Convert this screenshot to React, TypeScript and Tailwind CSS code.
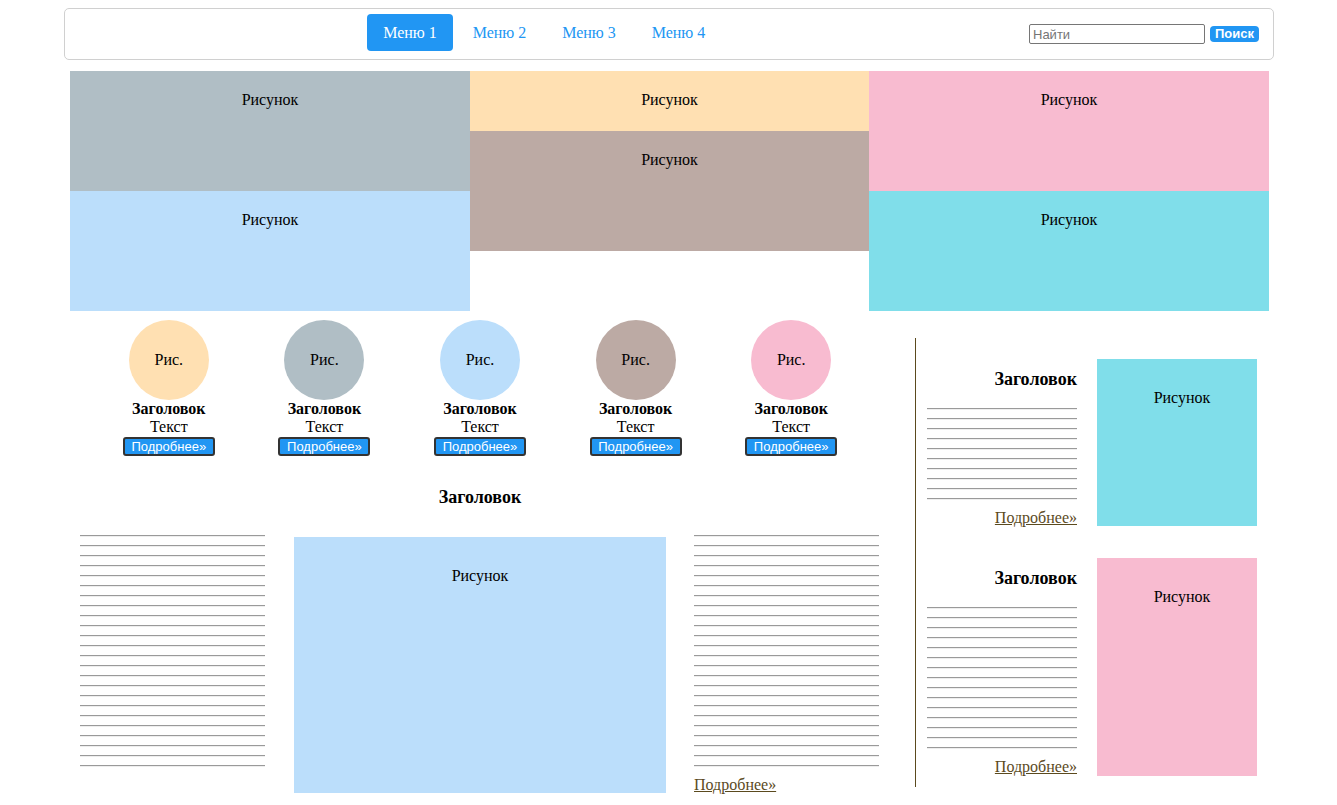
const serif = { fontFamily: '"Liberation Serif", "Times New Roman", serif' };

const Lines = ({ count }: { count: number }) => (
  <div>
    {Array.from({ length: count }).map((_, i) => (
      <div key={i} className="h-[10px]">
        <div className="border-t border-b border-t-[#9a9a9a] border-b-[#eeeeee]" />
      </div>
    ))}
  </div>
);

const Picture = ({ color, h, pt, label = "Рисунок" }: { color: string; h: string; pt: string; label?: string }) => (
  <div className={`${color} ${h} ${pt} text-center text-[16px] leading-[18px] text-black`}>{label}</div>
);

const cards = ["bg-[#FFE0B2]", "bg-[#B0BEC5]", "bg-[#BBDEFB]", "bg-[#BCAAA4]", "bg-[#F8BBD0]"];

const App = () => {
  return (
    <div className="min-h-[805px] bg-white pt-[8px]" style={serif}>
      <nav className="ml-[64px] w-[1210px] h-[52px] border border-[#d0d0d0] rounded-[5px] flex">
        <div className="ml-[302px] mt-[5px] flex gap-[3.5px] h-[37px]">
          <a className="w-[86px] h-[37px] rounded-[4px] bg-[#2196F3] text-white text-[16px] flex items-center justify-center">Меню 1</a>
          <a className="w-[86px] h-[37px] text-[#2196F3] text-[16px] flex items-center justify-center">Меню 2</a>
          <a className="w-[86px] h-[37px] text-[#2196F3] text-[16px] flex items-center justify-center">Меню 3</a>
          <a className="w-[86px] h-[37px] text-[#2196F3] text-[16px] flex items-center justify-center">Меню 4</a>
        </div>
        <div className="ml-auto mr-[14px] flex items-center gap-[5px]" style={{ fontFamily: '"Liberation Sans", Arial, sans-serif' }}>
          <input
            type="text"
            placeholder="Найти"
            className="w-[176px] h-[20px] border border-[#767676] rounded-[2px] px-[3px] text-[13px] outline-none placeholder:text-[#757575]"
          />
          <button className="w-[49px] h-[16px] rounded-[4px] bg-[#2196F3] text-white text-[13px] font-bold leading-[16px]">Поиск</button>
        </div>
      </nav>

      <div className="ml-[70px] w-[1199px] mt-[11px]">
        <div className="grid grid-cols-[400px_399px_400px]">
          <div>
            <Picture color="bg-[#B0BEC5]" h="h-[120px]" pt="pt-[20px]" />
            <Picture color="bg-[#BBDEFB]" h="h-[120px]" pt="pt-[20px]" />
          </div>
          <div>
            <Picture color="bg-[#FFE0B2]" h="h-[60px]" pt="pt-[20px]" />
            <Picture color="bg-[#BCAAA4]" h="h-[120px]" pt="pt-[20px]" />
          </div>
          <div>
            <Picture color="bg-[#F8BBD0]" h="h-[120px]" pt="pt-[20px]" />
            <Picture color="bg-[#80DEEA]" h="h-[120px]" pt="pt-[20px]" />
          </div>
        </div>

        <div className="flex">
          <div className="w-[820px] px-[10px] pt-[9px]">
            <div className="w-[778px] mx-auto grid grid-cols-5">
              {cards.map((c, i) => (
                <div key={i} className="flex flex-col items-center text-black">
                  <div className={`${c} w-[80px] h-[80px] rounded-full flex items-center justify-center text-[16px]`}>Рис.</div>
                  <div className="text-[16px] font-bold leading-[18px]">Заголовок</div>
                  <div className="text-[16px] leading-[18px]">Текст</div>
                  <button
                    className="mt-[1px] w-[92px] h-[19px] bg-[#2196F3] border-2 border-[#333] rounded-[3px] text-white text-[13px] leading-[15px]"
                    style={{ fontFamily: '"Liberation Sans", Arial, sans-serif' }}
                  >
                    Подробнее»
                  </button>
                </div>
              ))}
            </div>
            <h2 className="mt-[31px] text-center text-[18px] font-bold leading-[21px]">Заголовок</h2>
            <div className="mt-[27px] flex">
              <div className="w-[185px]">
                <Lines count={24} />
              </div>
              <div className="ml-[29px] mt-[2px] w-[372px]">
                <Picture color="bg-[#BBDEFB]" h="h-[256px]" pt="pt-[30px]" />
              </div>
              <div className="ml-[28px] w-[185px]">
                <Lines count={24} />
                <a className="block text-[16px] leading-[19px] text-[#5b4a1e] underline">Подробнее»</a>
              </div>
            </div>
          </div>

          <aside className="ml-[25px] mt-[27px] self-start w-[354px] border-l border-[#5b4a1e] pl-[11px] pt-[21px] pb-[11px]">
            <div className="flex gap-[20px]">
              <div className="w-[150px] pt-[10px]">
                <h3 className="text-right text-[18px] font-bold leading-[21px]">Заголовок</h3>
                <div className="mt-[18px]">
                  <Lines count={10} />
                </div>
                <a className="block text-right text-[16px] leading-[19px] text-[#5b4a1e] underline">Подробнее»</a>
              </div>
              <div className="w-[160px]">
                <Picture color="bg-[#80DEEA] pl-[10px]" h="h-[167px]" pt="pt-[30px]" />
              </div>
            </div>
            <div className="mt-[31px] flex gap-[20px]">
              <div className="w-[150px] pt-[10px]">
                <h3 className="text-right text-[18px] font-bold leading-[21px]">Заголовок</h3>
                <div className="mt-[18px]">
                  <Lines count={15} />
                </div>
                <a className="block text-right text-[16px] leading-[19px] text-[#5b4a1e] underline">Подробнее»</a>
              </div>
              <div className="w-[160px]">
                <Picture color="bg-[#F8BBD0] pl-[10px]" h="h-[218px]" pt="pt-[30px]" />
              </div>
            </div>
          </aside>
        </div>
      </div>
    </div>
  );
};

export default App;
